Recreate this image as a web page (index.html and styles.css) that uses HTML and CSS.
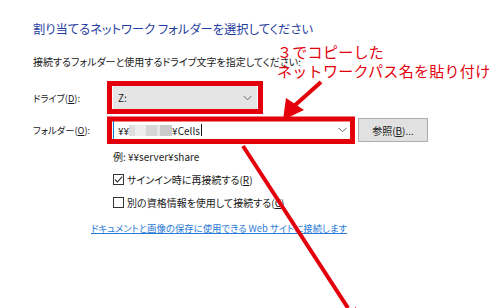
FILE: index.html
```html
<!DOCTYPE html>
<html lang="ja">
<head>
    <title>ネットワーク ドライブの割り当て</title>
    <link rel="stylesheet" href="styles.css">
</head>
<body>

    <div class="dialog">
        <h1 class="title">割り当てるネットワーク フォルダーを選択してください</h1>
        <p class="lead">接続するフォルダーと使用するドライブ文字を指定してください:</p>

        <div class="form">
            <label class="form-label">ドライブ(<u>D</u>):</label>
            <div class="select">
                <span>Z:</span>
                <svg class="chevron" width="9" height="6" viewBox="0 0 9 6"><path d="M0.5 0.8 L4.5 4.8 L8.5 0.8" fill="none" stroke="#666" stroke-width="1"/></svg>
            </div>

            <label class="form-label">フォルダー(<u>O</u>):</label>
            <div class="folder-row">
                <div class="combo">
                    <span>¥¥</span><span class="masked"></span><span>¥Cells</span><span class="caret"></span>
                    <svg class="chevron" width="9" height="6" viewBox="0 0 9 6"><path d="M0.5 0.8 L4.5 4.8 L8.5 0.8" fill="none" stroke="#666" stroke-width="1"/></svg>
                </div>
                <button class="browse">参照(<u>B</u>)...</button>
            </div>
        </div>

        <div class="options">
            <p class="example">例: ¥¥server¥share</p>
            <label class="check">
                <span class="box"><svg width="9" height="9" viewBox="0 0 9 9"><path d="M1 4.6 L3.4 7 L8.2 1.6" fill="none" stroke="#222" stroke-width="1.1"/></svg></span>
                <span>サインイン時に再接続する(<u>R</u>)</span>
            </label>
            <label class="check">
                <span class="box"></span>
                <span>別の資格情報を使用して接続する(<u>C</u>)</span>
            </label>
        </div>

        <a class="link" href="#">ドキュメントと画像の保存に使用できる Web サイトに接続します</a>
    </div>

    <!-- 注釈 (赤枠・矢印・コメント) -->
    <p class="note">３でコピーした<br>ネットワークパス名を貼り付け</p>
    <svg class="marks" width="500" height="308" viewBox="0 0 500 308">
        <rect x="109.5" y="83.5" width="151" height="28" fill="none" stroke="#e3000b" stroke-width="5"/>
        <rect x="109.5" y="119" width="243" height="22.5" fill="none" stroke="#e3000b" stroke-width="5"/>
        <line x1="321" y1="82" x2="293" y2="107" stroke="#e3000b" stroke-width="4"/>
        <polygon points="283,120 286,98 304,110" fill="#e3000b"/>
        <line x1="243" y1="146" x2="348" y2="308" stroke="#e3000b" stroke-width="4"/>
        <polygon points="356,307 340,317 357,334" fill="#e3000b"/>
    </svg>

</body>
</html>
```

FILE: styles.css
```css
body {
    margin: 0;
    width: 500px;
    height: 308px;
    overflow: hidden;
    background: white;
    position: relative;
    font-family: "Noto Sans CJK JP", "Noto Sans", sans-serif;
    font-feature-settings: "palt";
    color: #1a1a1a;
}

.dialog {
    padding: 21px 0 0 33px;
}

.title {
    margin: 0;
    font-size: 12.3px;
    line-height: 16px;
    font-weight: normal;
    color: #1f3d9e;
}

.lead {
    margin: 19px 0 0;
    font-size: 10px;
    line-height: 12px;
}

.form {
    display: grid;
    grid-template-columns: 80px auto;
    row-gap: 9px;
    margin-top: 18px;
    font-size: 10px;
}

.form-label {
    align-self: center;
    font-size: 9.3px;
}

.select {
    display: flex;
    align-items: center;
    justify-content: space-between;
    width: 144px;
    height: 23px;
    box-sizing: border-box;
    padding: 0 5px 0 5px;
    background: #e5e5e5;
    font-size: 10px;
}

.folder-row {
    display: flex;
    align-items: center;
    gap: 6px;
}

.combo {
    display: flex;
    align-items: center;
    width: 239px;
    height: 22px;
    box-sizing: border-box;
    padding: 0 4px;
    border: 1px solid #0078d7;
    background: white;
    font-size: 10px;
}

.combo .chevron {
    margin-left: auto;
}

.masked {
    display: inline-block;
    width: 43px;
    height: 11px;
    background: linear-gradient(to right, #dedede 0 14%, #ededed 14% 40%, #d6d6d6 40% 66%, #e6e6e6 66% 72%, #cbcbcb 72%);
}

.caret {
    display: inline-block;
    width: 1px;
    height: 12px;
    background: #111;
    margin-left: 1px;
}

.browse {
    width: 70px;
    height: 24px;
    padding: 0;
    border: 1px solid #adadad;
    background: #e1e1e1;
    font-family: inherit;
    font-size: 10px;
    color: #1a1a1a;
}

.options {
    margin: 9px 0 0 80px;
    font-size: 10px;
}

.example {
    margin: 0;
    line-height: 12px;
}

.check {
    display: flex;
    align-items: center;
    gap: 3px;
    height: 13px;
    margin-top: 10px;
}

.box {
    display: flex;
    align-items: center;
    justify-content: center;
    width: 11px;
    height: 11px;
    box-sizing: border-box;
    border: 1px solid #333;
    background: white;
}

.link {
    display: inline-block;
    margin: 13px 0 0 58px;
    font-size: 9.4px;
    line-height: 12px;
    color: #2a7bd6;
}

.note {
    position: absolute;
    left: 277px;
    top: 42px;
    margin: 0;
    font-size: 15px;
    line-height: 19px;
    letter-spacing: 0.3px;
    color: #e3000b;
    font-feature-settings: normal;
}

.marks {
    position: absolute;
    left: 0;
    top: 0;
}
```
